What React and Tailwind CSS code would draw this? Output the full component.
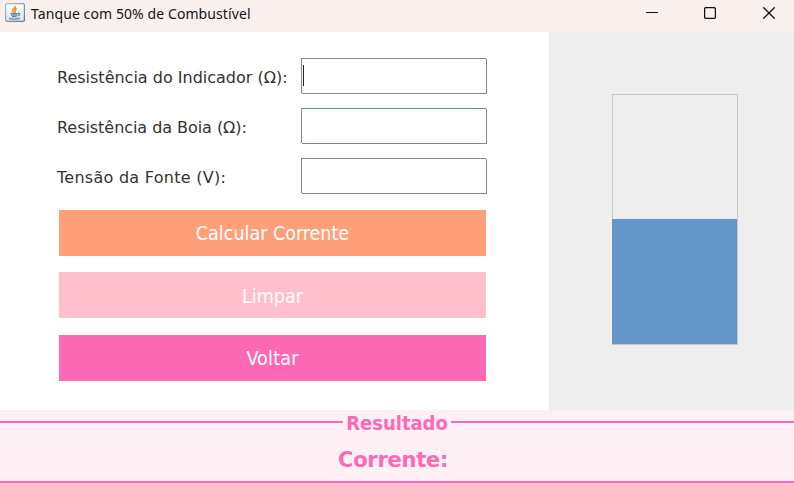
const fields = [
  { label: 'Resistência do Indicador (Ω):', focused: true, tracking: 'tracking-[0px]' },
  { label: 'Resistência da Boia (Ω):', focused: false, tracking: 'tracking-[-0.05px]' },
  { label: 'Tensão da Fonte (V):', focused: false, tracking: 'tracking-[0.27px]' },
];

function JavaIcon() {
  return (
    <svg className="h-5 w-5 shrink-0" viewBox="0 0 20 20" fill="none">
      <defs>
        <linearGradient id="frame" x1="0" y1="0" x2="1" y2="1">
          <stop offset="0" stopColor="#b4c0cb" />
          <stop offset="1" stopColor="#527a9f" />
        </linearGradient>
        <linearGradient id="face" x1="0" y1="0" x2="0" y2="1">
          <stop offset="0" stopColor="#fdfdfd" />
          <stop offset="1" stopColor="#dce3ea" />
        </linearGradient>
      </defs>
      <rect x="0.6" y="0.6" width="18.8" height="17.8" rx="1.5" fill="url(#face)" stroke="url(#frame)" strokeWidth="1.2" />
      <path d="M10.2 3.2c.8 1.8-3 2.8-2.6 4.6.2.9 1.2 1.3 1.4 2M11.6 5.6c-1.6.8-2.2 1.5-1.5 2.4.4.6.2 1.1-.2 1.6" stroke="#f0913f" strokeWidth="1.7" />
      <path d="M5.5 10.7h7.2M6 12.2h6.4M6.8 13.7h4.8M13 10.3c2.6-.4 2 2-.2 2.5M4 15.4c2.5 1 8.5.9 11-.2" stroke="#6389aa" strokeWidth="1.3" />
    </svg>
  );
}

function TitleBar() {
  return (
    <header className="flex h-8 items-start justify-between bg-[#f9f0ee]">
      <div className="flex pl-[5px] pt-[3px]">
        <JavaIcon />
        <h1 className="ml-[6px] h-5 whitespace-nowrap font-['Noto_Sans',sans-serif] text-[14px] leading-[21px] tracking-[0.09px] text-[#151313]">
          Tanque com 50% de Combustível
        </h1>
      </div>
      <div className="flex pr-[19px] pt-[7px]">
        <svg className="mr-[46px] h-3 w-3" viewBox="0 0 12 12"><path d="M0 5.5h12" stroke="#111" /></svg>
        <svg className="mr-[47px] h-3 w-3" viewBox="0 0 12 12"><rect x=".6" y=".6" width="10.8" height="10.8" rx="1.5" fill="none" stroke="#111" strokeWidth="1.3" /></svg>
        <svg className="h-3 w-3" viewBox="0 0 12 12"><path d="M.3.3l11.4 11.4M11.7.3L.3 11.7" stroke="#111" strokeWidth="1.3" /></svg>
      </div>
    </header>
  );
}

function Field({ label, focused, tracking }) {
  return (
    <div className="flex h-9 items-center">
      <label className={`w-[244px] whitespace-nowrap pt-1 font-['DejaVu_Sans',sans-serif] text-[16px] leading-5 text-[#333] ${tracking}`}>{label}</label>
      <div className="relative flex h-9 w-[186px] border border-[#7a8a99] bg-white pl-px pt-[6px]">
        {focused && <span className="h-[21px] w-px bg-[#222]" />}
        <span className="absolute -right-px -top-px h-px w-px bg-[#eef1f4]" />
        <span className="absolute -bottom-px -left-px h-px w-px bg-[#eef1f4]" />
      </div>
    </div>
  );
}

export default function App() {
  return (
    <div className="flex h-[483px] w-[794px] flex-col overflow-hidden bg-white font-['DejaVu_Sans_Condensed','DejaVu_Sans',sans-serif]">
      <TitleBar />
      <main className="flex h-[378px]">
        <section className="w-[549px] pl-[57px] pt-[26px]">
          <div className="flex flex-col gap-[14px]">
            {fields.map((f) => <Field key={f.label} {...f} />)}
          </div>
          <div className="ml-[2px] mt-4 flex w-[427px] flex-col text-[19.5px] text-white">
            <button className="h-[46px] bg-[#ffa07a] pt-[2px]">Calcular Corrente</button>
            <button className="mt-4 h-[46px] bg-[#ffc0cb] pt-1">Limpar</button>
            <button className="mt-[17px] h-[46px] bg-[#ff69b4] pt-[2px] tracking-[0.2px]">Voltar</button>
          </div>
        </section>
        <aside className="flex-1 bg-[#eee] pl-[63px] pt-[62px]">
          <div className="flex h-[251px] w-[126px] flex-col border border-[#c8c8c8]">
            <div className="-ml-px mt-[124px] h-[125px] w-[125px] bg-[#6496c8]" />
          </div>
        </aside>
      </main>
      <footer className="flex h-[73px] flex-col border-b-2 border-[#ff69b4] bg-[#fff0f5] font-bold text-[#ff69b4]">
        <div className="flex h-6 items-center">
          <span className="h-[2px] w-[343px] bg-[#ff69b4]" />
          <h2 className="flex w-[108px] justify-center whitespace-nowrap pt-[2px] text-[20px] leading-[22px]">Resultado</h2>
          <span className="h-[2px] flex-1 bg-[#ff69b4]" />
        </div>
        <p className="mt-[14px] pl-[338px] font-['DejaVu_Sans',sans-serif] text-[21px] leading-6 tracking-[-0.25px]">Corrente:</p>
      </footer>
    </div>
  );
}
